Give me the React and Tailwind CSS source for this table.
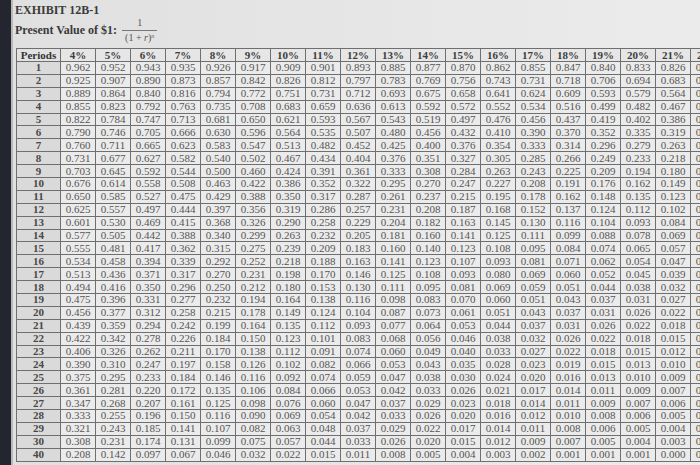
const rates = [4, 5, 6, 7, 8, 9, 10, 11, 12, 13, 14, 15, 16, 17, 18, 19, 20, 21, 22];
const periods = [...Array.from({ length: 30 }, (_, i) => i + 1), 40];

const pv = (r, n) => (1 / Math.pow(1 + r / 100, n)).toFixed(3);

const serif = { fontFamily: '"Liberation Serif", "DejaVu Serif", serif' };

const Fraction = () => (
    <span className="inline-flex flex-col items-center leading-none text-[10px] font-normal text-[#555] ml-[5px]">
        <span className="px-[2px] pb-[2px]">1</span>
        <span className="border-t border-[#777] px-[3px] pt-[2px]">
            (1 + <i>r</i>)<sup className="text-[6px] italic">n</sup>
        </span>
    </span>
);

const App = () => {
    return (
        <div className="w-[700px] h-[465px] overflow-hidden flex bg-[#e3e3e3] text-[#333]" style={serif}>
            <div className="w-[11px] shrink-0 bg-[#23262f]"></div>
            <div className="w-[2px] shrink-0 bg-[#b9b9bb]"></div>
            <div className="flex-grow pl-[2px] bg-gradient-to-r from-[#e0e0e0] to-[#ececec]">
                <div className="pt-[3px] text-[12px] font-bold leading-[14px] text-[#3a3a3a]">
                    <h1>EXHIBIT 12B-1</h1>
                    <div className="flex items-center h-[26px]">
                        <span>Present Value of $1:</span>
                        <Fraction />
                    </div>
                </div>
                <div className="mt-[5px] ml-px grid grid-cols-[43px_repeat(19,34px)] gap-px bg-[#6f6f6f] p-px w-max">
                    <div className="h-[12px] flex items-center justify-center bg-[#e2e2e2] text-[11px] font-bold leading-none">Periods</div>
                    {rates.map((r) => (
                        <div key={r} className="h-[12px] flex items-center justify-center bg-[#e6e6e6] text-[11px] font-bold leading-none text-[#3d3d3d]">
                            {r}%
                        </div>
                    ))}
                    {periods.map((n) => (
                        <div key={n} className="contents">
                            <div className="h-[11.9px] flex items-center justify-center bg-[#dadada] text-[11px] font-bold leading-none text-[#484848]">
                                {n}
                            </div>
                            {rates.map((r) => (
                                <div key={r} className="h-[11.9px] flex items-center justify-center bg-[#ebebeb] text-[11px] leading-none text-[#555]">
                                    {pv(r, n)}
                                </div>
                            ))}
                        </div>
                    ))}
                </div>
            </div>
        </div>
    );
};

export default App;
